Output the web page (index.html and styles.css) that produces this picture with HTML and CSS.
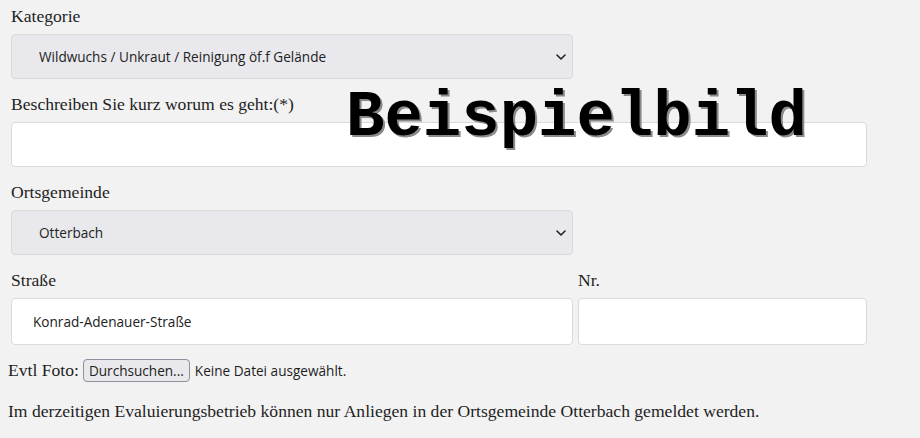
FILE: index.html
```html
<!DOCTYPE html>
<html lang="de">
<head>
<meta charset="utf-8">
<title>Anliegen melden</title>
<link rel="stylesheet" href="styles.css">
</head>
<body>
<form class="form">
  <div class="field">
    <label class="label" for="kat">Kategorie</label>
    <div class="select-wrap">
      <select id="kat" class="control select">
        <option>Wildwuchs / Unkraut / Reinigung öf.f Gelände</option>
      </select>
      <svg class="chevron" width="10" height="6" viewBox="0 0 10 6"><path d="M1 1 L5 5 L9 1" fill="none" stroke="#222" stroke-width="1.6" stroke-linecap="round" stroke-linejoin="round"/></svg>
    </div>
  </div>
  <div class="field">
    <label class="label" for="desc">Beschreiben Sie kurz worum es geht:(*)</label>
    <input id="desc" class="control input wide" type="text">
  </div>
  <div class="field">
    <label class="label" for="ort">Ortsgemeinde</label>
    <div class="select-wrap">
      <select id="ort" class="control select">
        <option>Otterbach</option>
      </select>
      <svg class="chevron" width="10" height="6" viewBox="0 0 10 6"><path d="M1 1 L5 5 L9 1" fill="none" stroke="#222" stroke-width="1.6" stroke-linecap="round" stroke-linejoin="round"/></svg>
    </div>
  </div>
  <div class="field row">
    <div class="col-street">
      <label class="label" for="str">Straße</label>
      <input id="str" class="control input tall" type="text" value="Konrad-Adenauer-Straße">
    </div>
    <div class="col-nr">
      <label class="label" for="nr">Nr.</label>
      <input id="nr" class="control input tall" type="text">
    </div>
  </div>
</form>
<div class="foto">
  <span>Evtl Foto:</span>
  <button type="button" class="file-btn">Durchsuchen...</button>
  <span class="file-state">Keine Datei ausgewählt.</span>
</div>
<p class="note">Im derzeitigen Evaluierungsbetrieb können nur Anliegen in der Ortsgemeinde Otterbach gemeldet werden.</p>
<div class="stamp">Beispielbild</div>
</body>
</html>
```
FILE: styles.css
```css
html, body {
  margin: 0;
  padding: 0;
}
body {
  background: #f2f2f2;
  font-family: "Liberation Serif", "Times New Roman", serif;
  font-size: 17.6px;
  color: #1e1e1e;
  padding: 6px 8px 0 8px;
  position: relative;
  height: 438px;
  box-sizing: border-box;
  overflow: hidden;
}
.form {
  padding-left: 3px;
  width: 856px;
}
.field {
  margin-bottom: 15px;
}
.label {
  display: block;
  line-height: 20px;
  margin-bottom: 8px;
}
.control {
  box-sizing: border-box;
  height: 45px;
  border: 1px solid #dadada;
  border-radius: 4px;
  font-family: "Open Sans", "Noto Sans", sans-serif;
  font-size: 13.6px;
  color: #222;
  margin: 0;
}
.select-wrap {
  position: relative;
  width: 562px;
}
.select {
  -webkit-appearance: none;
  appearance: none;
  width: 100%;
  background: #e9e9ed;
  padding: 0 0 0 27px;
}
.chevron {
  position: absolute;
  right: 7px;
  top: 20px;
}
.input {
  background: #fff;
  padding: 0 0 0 21px;
  width: 100%;
}
.tall {
  height: 47px;
}
.wide {
  width: 856px;
}
.row {
  display: flex;
  gap: 5px;
  margin-bottom: 12px;
}
.col-street {
  width: 562px;
}
.col-nr {
  width: 289px;
}
.foto {
  display: flex;
  align-items: center;
  height: 26px;
}
.file-btn {
  margin-left: 4px;
  height: 23px;
  padding: 0 5px;
  background: #e9e9ed;
  border: 1px solid #8f8f9d;
  border-radius: 4px;
  font-family: "Open Sans", "Noto Sans", sans-serif;
  font-size: 13.6px;
  color: #222;
}
.file-state {
  margin-left: 5px;
  font-family: "Open Sans", "Noto Sans", sans-serif;
  font-size: 13.6px;
}
.note {
  margin: 18px 0 0 0;
  line-height: 20px;
}
.stamp {
  position: absolute;
  left: 346px;
  top: 86px;
  font-family: "Courier New", "Nimbus Mono PS", "FreeMono", "Courier", "Liberation Mono", monospace;
  font-weight: bold;
  font-size: 64px;
  line-height: 64px;
  color: #000;
  text-shadow: 2px 2px 0 #8a8a8a;
}
```
